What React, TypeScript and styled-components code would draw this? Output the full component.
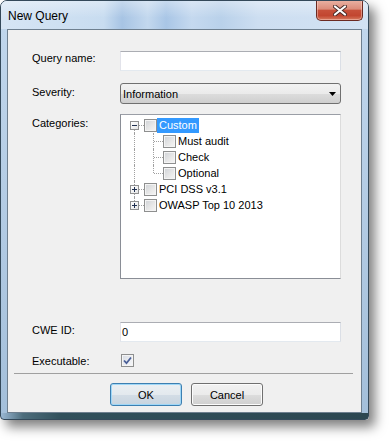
import React from 'react';
import styled, { createGlobalStyle, css } from 'styled-components';

const Global = createGlobalStyle`
  html, body { margin: 0; padding: 0; background: #ffffff; }
  body { font-family: "Liberation Sans", Arial, sans-serif; font-size: 11px; color: #000; }
  #root { width: 389px; height: 441px; }
`;

const Window = styled.div`
  box-sizing: border-box;
  width: 369px;
  height: 420px;
  border: 1px solid #34495a;
  border-radius: 7px 7px 4px 4px;
  display: flex;
  flex-direction: column;
  overflow: hidden;
  box-shadow: 6px 7px 12px rgba(0, 0, 0, 0.5);
  background:
    linear-gradient(to right, #9ab8d4 0px, #4d6d7c 22px, #31505b 60px, #2c4751 100%) left bottom / 100% 6px no-repeat,
    linear-gradient(to bottom, #d3e3f3 0px, #c0d6ec 30px, #b0c9e2 60%, #a3bfda 100%);
`;

const TitleBar = styled.div`
  height: 28px;
  flex-shrink: 0;
  display: flex;
  justify-content: space-between;
  padding: 0 5px 0 7px;
  background:
    linear-gradient(to bottom, rgba(255, 255, 255, 0.35), rgba(255, 255, 255, 0) 60%),
    linear-gradient(to right, #d6e5f4 0%, #c8dcf0 28%, #a7c4e4 33%, #c3d8ee 40%, #a9c6e6 45%, #c5d9ef 52%, #b9d1ea 60%, #cddef1 70%, #d2e2f3 100%);
`;

const Title = styled.div`
  align-self: center;
  font-size: 12px;
  color: #000;
  margin-top: 2px;
`;

const CloseButton = styled.div`
  align-self: flex-start;
  margin-top: -1px;
  box-sizing: border-box;
  width: 47px;
  height: 21px;
  border: 1px solid #6b2a22;
  border-top: none;
  border-radius: 0 0 5px 5px;
  display: flex;
  align-items: center;
  justify-content: center;
  background: linear-gradient(to bottom, #ebb3a5 0%, #dc8c7a 45%, #c7503a 52%, #c24630 78%, #d77a5f 100%);
  box-shadow: inset 0 0 0 1px rgba(255, 220, 210, 0.45);
`;

const Body = styled.div`
  flex: 1;
  display: flex;
  padding: 0 5px 6px 6px;
`;

const Client = styled.div`
  box-sizing: border-box;
  width: 355px;
  height: 384px;
  border: 1px solid #6e7f8f;
  background: #f0f0f0;
  display: flex;
  flex-direction: column;
`;

const Form = styled.div`
  padding: 21px 0 0 24px;
  display: flex;
  flex-direction: column;
`;

const Row = styled.div<{ $gap: number }>`
  display: flex;
  align-items: flex-start;
  margin-top: ${(p) => p.$gap}px;
`;

const Label = styled.div<{ $dy?: number }>`
  width: 88px;
  flex-shrink: 0;
  line-height: 14px;
  padding-top: ${(p) => (p.$dy ?? 1)}px;
`;

const TextBox = styled.div`
  box-sizing: border-box;
  width: 221px;
  height: 20px;
  border: 1px solid;
  border-color: #abadb3 #dbdfe6 #e3e9ef #e2e3ea;
  background: #fff;
  padding: 0 1px;
  line-height: 18px;
`;

const Select = styled.div`
  box-sizing: border-box;
  width: 221px;
  height: 21px;
  border: 1px solid #707070;
  border-radius: 3px;
  background: linear-gradient(to bottom, #f2f2f2 0%, #ebebeb 50%, #dddddd 51%, #cfcfcf 100%);
  display: flex;
  align-items: center;
  justify-content: space-between;
  padding: 0 4px 0 2px;
`;

const Tree = styled.div`
  box-sizing: border-box;
  width: 221px;
  height: 165px;
  border: 1px solid;
  border-color: #9a9ea6 #dcdcdc #8a8e96 #8a8e96;
  background: #fff;
  padding: 2px 0 0 4px;
  display: flex;
  flex-direction: column;
`;

const TreeRow = styled.div`
  display: flex;
  align-items: center;
  height: 16px;
`;

const dot = '#a0a0a0';

const Gutter = styled.div<{ $up?: boolean; $down?: boolean; $right?: boolean }>`
  position: relative;
  width: 19px;
  height: 16px;
  flex-shrink: 0;
  ${(p) =>
    (p.$up || p.$down) &&
    css`
      &::before {
        content: '';
        position: absolute;
        left: 9px;
        top: ${p.$up ? 0 : 8}px;
        bottom: ${p.$down ? 0 : 8}px;
        border-left: 1px dotted ${dot};
      }
    `}
  ${(p) =>
    p.$right &&
    css`
      &::after {
        content: '';
        position: absolute;
        left: 10px;
        right: 0;
        top: 8px;
        border-top: 1px dotted ${dot};
      }
    `}
`;

const Expander = styled.div<{ $open: boolean }>`
  position: absolute;
  left: 5px;
  top: 4px;
  box-sizing: border-box;
  width: 9px;
  height: 9px;
  border: 1px solid #919191;
  background: linear-gradient(135deg, #ffffff 0%, #e6e6e6 100%);
  z-index: 1;
  &::before {
    content: '';
    position: absolute;
    left: 1px;
    top: 3px;
    width: 5px;
    height: 1px;
    background: #1f2f4f;
  }
  ${(p) =>
    !p.$open &&
    css`
      &::after {
        content: '';
        position: absolute;
        left: 3px;
        top: 1px;
        width: 1px;
        height: 5px;
        background: #1f2f4f;
      }
    `}
`;

const Check = styled.div`
  box-sizing: border-box;
  width: 13px;
  height: 13px;
  flex-shrink: 0;
  border: 1px solid #8e8f8f;
  background: linear-gradient(135deg, #cfd2d6 0%, #e9e9e9 60%, #f6f6f6 100%);
  box-shadow: inset 0 0 0 1px #f4f4f4;
  display: flex;
  align-items: center;
  justify-content: center;
`;

const CheckBox = styled(Check)`
  margin-left: 1px;
  background: linear-gradient(135deg, #d6dbe3 0%, #eceef2 60%, #f7f8fa 100%);
`;

const NodeText = styled.span<{ $selected?: boolean }>`
  line-height: 15px;
  padding: 0 2px;
  white-space: nowrap;
  ${(p) =>
    p.$selected &&
    css`
      background: #3399ff;
      color: #fff;
    `}
`;

const Separator = styled.div`
  height: 0;
  border-top: 1px solid #a0a0a0;
  margin: 5px 8px 0 6px;
`;

const ButtonBar = styled.div`
  display: flex;
  gap: 9px;
  padding-left: 102px;
  margin-top: 9px;
`;

const Button = styled.div<{ $default?: boolean }>`
  box-sizing: border-box;
  width: 72px;
  height: 23px;
  border: 1px solid #707070;
  border-radius: 3px;
  display: flex;
  align-items: center;
  justify-content: center;
  background: linear-gradient(to bottom, #f2f2f2 0%, #ebebeb 50%, #dddddd 51%, #cfcfcf 100%);
  box-shadow: inset 0 0 0 1px #fcfcfc;
  ${(p) =>
    p.$default &&
    css`
      border-color: #3c7fb1;
      box-shadow: inset 0 0 0 1px #9fd7f7;
      background: linear-gradient(to bottom, #eaeff3 0%, #e3e9ee 50%, #d3dde6 51%, #c8d4df 100%);
    `}
`;

type Node = {
  text: string;
  gutters: { up?: boolean; down?: boolean; right?: boolean; expander?: 'open' | 'closed' }[];
  selected?: boolean;
};

const nodes: Node[] = [
  { text: 'Custom', selected: true, gutters: [{ down: true, right: true, expander: 'open' }] },
  { text: 'Must audit', gutters: [{ up: true, down: true }, { up: true, down: true, right: true }] },
  { text: 'Check', gutters: [{ up: true, down: true }, { up: true, down: true, right: true }] },
  { text: 'Optional', gutters: [{ up: true, down: true }, { up: true, right: true }] },
  { text: 'PCI DSS v3.1', gutters: [{ up: true, down: true, right: true, expander: 'closed' }] },
  { text: 'OWASP Top 10 2013', gutters: [{ up: true, right: true, expander: 'closed' }] },
];

export default function App() {
  return (
    <>
      <Global />
      <Window>
        <TitleBar>
          <Title>New Query</Title>
          <CloseButton>
            <svg width="14" height="11" viewBox="0 0 14 11">
              <path d="M2 1.5 L12 9.5 M12 1.5 L2 9.5" stroke="#4a2b28" strokeWidth="4" strokeLinecap="round" />
              <path d="M2 1.5 L12 9.5 M12 1.5 L2 9.5" stroke="#ffffff" strokeWidth="2.2" strokeLinecap="round" />
            </svg>
          </CloseButton>
        </TitleBar>
        <Body>
          <Client>
            <Form>
              <Row $gap={0}>
                <Label $dy={0}>Query name:</Label>
                <TextBox />
              </Row>
              <Row $gap={12}>
                <Label $dy={2}>Severity:</Label>
                <Select>
                  <span>Information</span>
                  <svg width="7" height="4" viewBox="0 0 7 4">
                    <polygon points="0,0 7,0 3.5,4" fill="#000" />
                  </svg>
                </Select>
              </Row>
              <Row $gap={10}>
                <Label $dy={2}>Categories:</Label>
                <Tree>
                  {nodes.map((n) => (
                    <TreeRow key={n.text}>
                      {n.gutters.map((g, i) => (
                        <Gutter key={i} $up={g.up} $down={g.down} $right={g.right}>
                          {g.expander && <Expander $open={g.expander === 'open'} />}
                        </Gutter>
                      ))}
                      <Check />
                      <NodeText $selected={n.selected}>{n.text}</NodeText>
                    </TreeRow>
                  ))}
                </Tree>
              </Row>
              <Row $gap={43}>
                <Label $dy={1}>CWE ID:</Label>
                <TextBox>0</TextBox>
              </Row>
              <Row $gap={12}>
                <Label $dy={0}>Executable:</Label>
                <CheckBox>
                  <svg width="9" height="9" viewBox="0 0 9 9">
                    <path d="M1 4.5 L3.5 7.2 L8 1.5" fill="none" stroke="#4a5f97" strokeWidth="1.8" />
                  </svg>
                </CheckBox>
              </Row>
            </Form>
            <Separator />
            <ButtonBar>
              <Button $default>OK</Button>
              <Button>Cancel</Button>
            </ButtonBar>
          </Client>
        </Body>
      </Window>
    </>
  );
}
